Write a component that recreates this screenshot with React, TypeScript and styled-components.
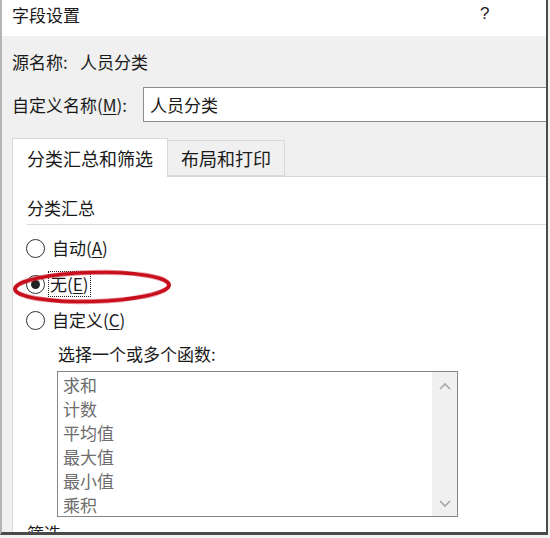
import React from 'react'
import styled, { createGlobalStyle } from 'styled-components'

const GlobalStyle = createGlobalStyle`
  html, body {
    margin: 0;
    padding: 0;
    background: #f3f3f3;
  }
  body {
    font-family: "Microsoft YaHei", "Noto Sans CJK SC", "Noto Sans", sans-serif;
    color: #1a1a1a;
  }
`

const Window = styled.div`
  position: relative;
  width: 544px;
  height: 532px;
  border-left: 2px solid #b4b4b4;
  border-right: 2px solid #4a4a4a;
  border-bottom: 3px solid #4a4a4a;
  background: #f0f0f0;
  overflow: hidden;
  box-sizing: content-box;
`

const TitleBar = styled.div`
  display: flex;
  align-items: center;
  height: 36px;
  padding: 0 0 8px 10px;
  box-sizing: border-box;
  background: #ffffff;
  font-size: 17px;
`

const TitleText = styled.span`
  flex: 1;
`

const HelpMark = styled.span`
  width: 66px;
  font-family: "Liberation Sans", sans-serif;
  font-size: 17px;
  color: #222;
`

const Body = styled.div`
  display: flex;
  flex-direction: column;
  padding: 13px 0 0 10px;
`

const FieldRow = styled.div<{ $height: number; $gap?: number }>`
  display: flex;
  align-items: center;
  height: ${(p) => p.$height}px;
  margin-bottom: ${(p) => p.$gap ?? 0}px;
  font-size: 17px;
  line-height: 24px;
`

const Label = styled.span<{ $width?: number }>`
  width: ${(p) => (p.$width ? `${p.$width}px` : 'auto')};
  flex-shrink: 0;
`

const Key = styled.span`
  text-decoration: underline;
  text-underline-offset: 2px;
`

const NameInput = styled.div`
  flex: 1;
  height: 35px;
  margin-right: -40px;
  display: flex;
  align-items: center;
  padding-left: 6px;
  background: #ffffff;
  border: 1px solid #8c8c8c;
  box-sizing: border-box;
  font-size: 17px;
`

const TabStrip = styled.div`
  display: flex;
  align-items: flex-end;
  height: 38px;
  border-bottom: 1px solid #d9d9d9;
`

const Tab = styled.div<{ $active?: boolean }>`
  display: flex;
  align-items: center;
  height: ${(p) => (p.$active ? 39 : 36)}px;
  margin-bottom: ${(p) => (p.$active ? -1 : 0)}px;
  padding: 0 ${(p) => (p.$active ? 14 : 13)}px;
  box-sizing: border-box;
  background: ${(p) => (p.$active ? '#ffffff' : '#f0f0f0')};
  border: 1px solid #d9d9d9;
  border-bottom: ${(p) => (p.$active ? 'none' : '1px solid #d9d9d9')};
  border-left: ${(p) => (p.$active ? '1px solid #d9d9d9' : 'none')};
  font-size: 18px;
  position: relative;
  z-index: ${(p) => (p.$active ? 1 : 0)};
`

const Panel = styled.div`
  display: flex;
  flex-direction: column;
  height: 400px;
  padding-left: 14px;
  background: #ffffff;
  border-left: 1px solid #d9d9d9;
`

const SectionTitle = styled.div`
  margin-top: 19px;
  height: 24px;
  line-height: 24px;
  font-size: 17px;
  padding-bottom: 4px;
  border-bottom: 1px solid #dcdcdc;
`

const Radios = styled.div`
  display: flex;
  flex-direction: column;
  margin-top: 5px;
`

const RadioRow = styled.div`
  display: flex;
  align-items: center;
  height: 36px;
  font-size: 17px;
  line-height: 24px;
`

const RadioCircle = styled.span<{ $checked?: boolean }>`
  display: flex;
  align-items: center;
  justify-content: center;
  width: 19px;
  height: 19px;
  margin: 0 7px 0 -1px;
  border: 1px solid #333333;
  border-radius: 50%;
  box-sizing: border-box;
  background: #ffffff;
  &::after {
    content: '';
    display: ${(p) => (p.$checked ? 'block' : 'none')};
    width: 9px;
    height: 9px;
    border-radius: 50%;
    background: #222222;
  }
`

const FocusLabel = styled.span`
  outline: 1px dotted #222;
  outline-offset: 0;
  padding: 0 1px;
  margin-left: -3px;
`

const SubLabel = styled.div`
  margin: 4px 0 0 31px;
  height: 24px;
  line-height: 24px;
  font-size: 17px;
`

const ListBox = styled.div`
  display: flex;
  width: 401px;
  height: 146px;
  margin: 5px 0 0 30px;
  border: 1px solid #868686;
  box-sizing: border-box;
  background: #ffffff;
`

const ListItems = styled.div`
  flex: 1;
  padding: 1px 0 0 5px;
`

const ListItem = styled.div`
  height: 24px;
  line-height: 24px;
  font-size: 17px;
  color: #6d6d6d;
`

const ScrollTrack = styled.div`
  display: flex;
  flex-direction: column;
  justify-content: space-between;
  align-items: center;
  width: 25px;
  padding: 10px 0 8px;
  box-sizing: border-box;
  background: #f0f0f0;
`

const FilterTitle = styled.div`
  margin-top: 4px;
  font-size: 17px;
  line-height: 24px;
`

const Annotation = styled.svg`
  position: absolute;
  left: 8px;
  top: 266px;
  pointer-events: none;
`

const Chevron = ({ up }: { up?: boolean }) => (
  <svg width="12" height="8" viewBox="0 0 12 8">
    <path
      d={up ? 'M1 7 L6 2 L11 7' : 'M1 1 L6 6 L11 1'}
      fill="none"
      stroke="#a8a8a8"
      strokeWidth="1.6"
    />
  </svg>
)

const functions = ['求和', '计数', '平均值', '最大值', '最小值', '乘积']

export default function App() {
  return (
    <>
      <GlobalStyle />
      <Window>
        <TitleBar>
          <TitleText>字段设置</TitleText>
          <HelpMark>?</HelpMark>
        </TitleBar>
        <Body>
          <FieldRow $height={26} $gap={12}>
            <Label $width={68}>源名称:</Label>
            <span>人员分类</span>
          </FieldRow>
          <FieldRow $height={35} $gap={16}>
            <Label $width={131}>
              自定义名称(<Key>M</Key>):
            </Label>
            <NameInput>人员分类</NameInput>
          </FieldRow>
          <TabStrip>
            <Tab $active>分类汇总和筛选</Tab>
            <Tab>布局和打印</Tab>
          </TabStrip>
          <Panel>
            <SectionTitle>分类汇总</SectionTitle>
            <Radios>
              <RadioRow>
                <RadioCircle />
                自动(<Key>A</Key>)
              </RadioRow>
              <RadioRow>
                <RadioCircle $checked />
                <FocusLabel>
                  无(<Key>E</Key>)
                </FocusLabel>
              </RadioRow>
              <RadioRow>
                <RadioCircle />
                自定义(<Key>C</Key>)
              </RadioRow>
            </Radios>
            <SubLabel>选择一个或多个函数:</SubLabel>
            <ListBox>
              <ListItems>
                {functions.map((f) => (
                  <ListItem key={f}>{f}</ListItem>
                ))}
              </ListItems>
              <ScrollTrack>
                <Chevron up />
                <Chevron />
              </ScrollTrack>
            </ListBox>
            <FilterTitle>筛选</FilterTitle>
          </Panel>
        </Body>
        <Annotation width="166" height="42" viewBox="0 0 166 42">
          <defs>
            <filter id="soft" x="-10%" y="-30%" width="120%" height="160%">
              <feGaussianBlur stdDeviation="0.6" />
            </filter>
          </defs>
          <ellipse
            cx="82"
            cy="21"
            rx="77"
            ry="14.5"
            transform="rotate(-1.5 82 21)"
            fill="none"
            stroke="#c8101c"
            strokeWidth="4"
            filter="url(#soft)"
          />
        </Annotation>
      </Window>
    </>
  )
}
